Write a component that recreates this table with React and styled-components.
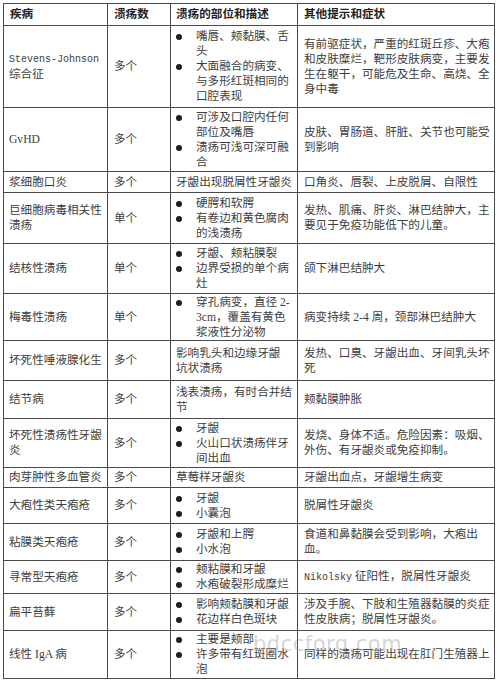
import React from 'react';
import styled, { createGlobalStyle } from 'styled-components';

const GlobalStyle = createGlobalStyle`
  html, body {
    margin: 0;
    padding: 0;
    background: #fff;
  }
  body {
    font-family: "Liberation Serif", "Noto Sans CJK SC", serif;
  }
`;

const rows = [
  {
    name: [<Mono key="m">Stevens-Johnson</Mono>, '综合征'],
    count: '多个',
    bullets: [['嘴唇、颊黏膜、舌', '头'], ['大面融合的病变、', '与多形红斑相同的', '口腔表现']],
    other: ['有前驱症状，严重的红斑丘疹、大疱', '和皮肤糜烂，靶形皮肤病变，主要发', '生在躯干，可能危及生命、高烧、全', '身中毒'],
    h: 82,
  },
  {
    name: ['GvHD'],
    count: '多个',
    bullets: [['可涉及口腔内任何', '部位及嘴唇'], ['溃疡可浅可深可融', '合']],
    other: ['皮肤、胃肠道、肝脏、关节也可能受', '到影响'],
    h: 64,
  },
  {
    name: ['浆细胞口炎'],
    count: '多个',
    text: ['牙龈出现脱屑性牙龈炎'],
    other: ['口角炎、唇裂、上皮脱屑、自限性'],
    h: 21,
  },
  {
    name: ['巨细胞病毒相关性', '溃疡'],
    count: '单个',
    bullets: [['硬腭和软腭'], ['有卷边和黄色腐肉', '的浅溃疡']],
    other: ['发热、肌痛、肝炎、淋巴结肿大，主', '要见于免疫功能低下的儿童。'],
    h: 51,
  },
  {
    name: ['结核性溃疡'],
    count: '单个',
    bullets: [['牙龈、颊粘膜裂'], ['边界受损的单个病', '灶']],
    other: ['颌下淋巴结肿大'],
    h: 50,
  },
  {
    name: ['梅毒性溃疡'],
    count: '单个',
    bullets: [['穿孔病变，直径 2-', '3cm，覆盖有黄色', '浆液性分泌物']],
    other: ['病变持续 2-4 周，颈部淋巴结肿大'],
    h: 47,
  },
  {
    name: ['坏死性唾液腺化生'],
    count: '多个',
    text: ['影响乳头和边缘牙龈', '坑状溃疡'],
    other: ['发热、口臭、牙龈出血、牙间乳头坏', '死'],
    h: 40,
  },
  {
    name: ['结节病'],
    count: '多个',
    text: ['浅表溃疡，有时合并结', '节'],
    other: ['颊黏膜肿胀'],
    h: 38,
  },
  {
    name: ['坏死性溃疡性牙龈', '炎'],
    count: '多个',
    bullets: [['牙龈'], ['火山口状溃疡伴牙', '间出血']],
    other: ['发烧、身体不适。危险因素：吸烟、', '外伤、有牙龈炎或免疫抑制。'],
    h: 49,
  },
  {
    name: ['肉芽肿性多血管炎'],
    count: '多个',
    text: ['草莓样牙龈炎'],
    other: ['牙龈出血点，牙龈增生病变'],
    h: 20,
  },
  {
    name: ['大疱性类天疱疮'],
    count: '多个',
    bullets: [['牙龈'], ['小囊泡']],
    other: ['脱屑性牙龈炎'],
    h: 36,
  },
  {
    name: ['粘膜类天疱疮'],
    count: '多个',
    bullets: [['牙龈和上腭'], ['小水泡']],
    other: ['食道和鼻黏膜会受到影响，大疱出', '血。'],
    h: 37,
  },
  {
    name: ['寻常型天疱疮'],
    count: '多个',
    bullets: [['颊粘膜和牙龈'], ['水疱破裂形成糜烂']],
    other: [<span key="n"><Mono>Nikolsky</Mono> 征阳性，脱屑性牙龈炎</span>],
    h: 33,
  },
  {
    name: ['扁平苔藓'],
    count: '多个',
    bullets: [['影响颊黏膜和牙龈'], ['花边样白色斑块']],
    other: ['涉及手腕、下肢和生殖器黏膜的炎症', '性皮肤病；脱屑性牙龈炎。'],
    h: 37,
  },
  {
    name: ['线性 IgA 病'],
    count: '多个',
    bullets: [['主要是颊部'], ['许多带有红斑圈水', '泡']],
    other: ['同样的溃疡可能出现在肛门生殖器上'],
    h: 48,
  },
];

function Mono({ children }) {
  return <MonoText>{children}</MonoText>;
}

const Lines = ({ lines }) => (
  <>
    {lines.map((l, i) => (
      <Line key={i}>{l}</Line>
    ))}
  </>
);

const App = () => {
  return (
    <Page>
      <GlobalStyle />
      <Table>
        <colgroup>
          <col style={{ width: 104 }} />
          <col style={{ width: 63 }} />
          <col style={{ width: 127 }} />
          <col style={{ width: 197 }} />
        </colgroup>
        <thead>
          <Row h={22}>
            <Head>疾病</Head>
            <Head>溃疡数</Head>
            <Head $site>溃疡的部位和描述</Head>
            <Head>其他提示和症状</Head>
          </Row>
        </thead>
        <tbody>
          {rows.map((r, i) => (
            <Row key={i} h={r.h}>
              <Cell $first>
                <Lines lines={r.name} />
              </Cell>
              <Cell>{r.count}</Cell>
              <Cell $site>
                {r.bullets ? (
                  r.bullets.map((b, j) => (
                    <Bullet key={j}>
                      <Dot />
                      <div>
                        <Lines lines={b} />
                      </div>
                    </Bullet>
                  ))
                ) : (
                  <Lines lines={r.text} />
                )}
              </Cell>
              <Cell>
                <Lines lines={r.other} />
              </Cell>
            </Row>
          ))}
        </tbody>
      </Table>
      <Watermark>bdccforg.com</Watermark>
    </Page>
  );
};

export default App;

const Page = styled.div`
  position: relative;
  width: 500px;
  height: 686px;
  padding: 3px 0 0 3px;
  box-sizing: border-box;
  overflow: hidden;
  background: #fff;
`;

const Table = styled.table`
  border-collapse: collapse;
  table-layout: fixed;
  width: 491px;
  color: #3d3d3d;
  font-size: 11.6px;
  line-height: 15px;
  font-family: "Liberation Serif", "Noto Sans CJK SC", serif;
`;

const Row = styled.tr`
  height: ${(p) => p.h}px;
`;

const Head = styled.th`
  border: 1px solid #4a4a4a;
  padding: 0 ${(p) => (p.$site ? 5 : 6)}px;
  text-align: left;
  font-weight: 700;
  color: #222;
  vertical-align: middle;
  white-space: nowrap;
`;

const Cell = styled.td`
  border: 1px solid #4a4a4a;
  padding: 0 ${(p) => (p.$first ? 5 : p.$site ? 5 : 6)}px;
  vertical-align: middle;
  white-space: nowrap;
  overflow: hidden;
`;

const Line = styled.div`
  white-space: nowrap;
`;

const Bullet = styled.div`
  display: flex;
  align-items: flex-start;
`;

const Dot = styled.span`
  flex: none;
  width: 6px;
  height: 6px;
  margin: 5px 14px 0 0;
  border-radius: 50%;
  background: #1e1e1e;
`;

const MonoText = styled.span`
  font-family: "Liberation Mono", "Noto Sans CJK SC", monospace;
  font-size: 10px;
`;

const Watermark = styled.div`
  position: absolute;
  left: 253px;
  top: 632px;
  font-family: "DejaVu Sans", sans-serif;
  font-size: 21px;
  letter-spacing: 0.5px;
  color: rgba(160, 160, 160, 0.45);
  pointer-events: none;
`;
